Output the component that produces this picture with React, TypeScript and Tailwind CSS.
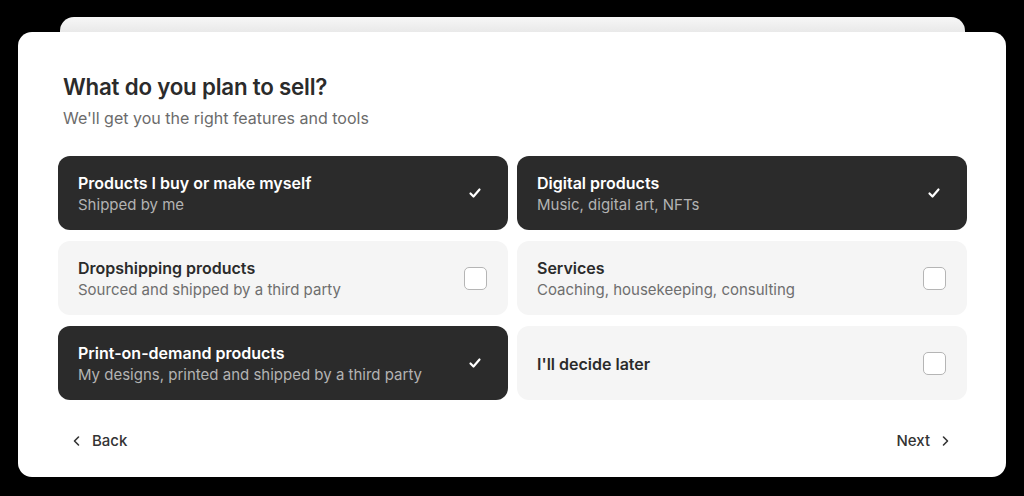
import React from "react";

type Opt = { title: string; sub?: string; checked: boolean };

const options: Opt[] = [
  { title: "Products I buy or make myself", sub: "Shipped by me", checked: true },
  { title: "Digital products", sub: "Music, digital art, NFTs", checked: true },
  { title: "Dropshipping products", sub: "Sourced and shipped by a third party", checked: false },
  { title: "Services", sub: "Coaching, housekeeping, consulting", checked: false },
  { title: "Print-on-demand products", sub: "My designs, printed and shipped by a third party", checked: true },
  { title: "I'll decide later", checked: false },
];

function Check() {
  return (
    <svg width="14" height="14" viewBox="0 0 14 14" fill="none">
      <path d="M2.5 7.5 L5.5 10.5 L11.5 3.5" stroke="white" strokeWidth="2.2" strokeLinecap="round" strokeLinejoin="round" />
    </svg>
  );
}

function Option({ o }: { o: Opt }) {
  return (
    <div
      className={
        o.checked
          ? "flex h-[74px] items-center justify-between rounded-xl bg-[#2b2b2b] pl-5 pr-5"
          : "flex h-[74px] items-center justify-between rounded-xl bg-[#f5f5f5] pl-5 pr-5"
      }
    >
      <div className="flex flex-col pt-[1px]">
        <div className={o.checked ? "text-[16px] leading-[22px] font-semibold text-white" : "text-[16px] leading-[22px] font-semibold text-[#2b2b2b]"}>
          {o.title}
        </div>
        {o.sub && (
          <div className={o.checked ? "text-[15px] leading-[22px] text-[#b3b3b3]" : "text-[15px] leading-[22px] text-[#6e6e6e]"}>
            {o.sub}
          </div>
        )}
      </div>
      {o.checked ? (
        <div className="mr-[2px] flex h-[23px] w-[23px] items-center justify-center">
          <Check />
        </div>
      ) : (
        <div className="mr-[1px] h-[23px] w-[23px] rounded-[5px] border-[1.5px] border-[#b5b5b5] bg-white" />
      )}
    </div>
  );
}

export default function App() {
  return (
    <div
      className="flex h-[496px] w-[1024px] flex-col bg-black"
      style={{ fontFamily: "Inter, 'Noto Sans', sans-serif" }}
    >
      <div className="mx-[60px] mt-[17px] h-[15px] w-[905px] rounded-t-[14px] bg-gradient-to-b from-[#f7f7f7] to-[#e9e9e9]" />
      <div className="mx-[18px] flex h-[445px] w-[988px] flex-col rounded-[14px] bg-white pl-10 pr-[39px] pt-[40px]">
        <div className="px-[5px]">
          <h1 className="text-[22.3px] leading-[30px] font-semibold tracking-[-0.2px] text-[#2b2b2b]">What do you plan to sell?</h1>
          <p className="mt-[4px] text-[16px] leading-[24px] text-[#6b6b6b]">We'll get you the right features and tools</p>
        </div>
        <div className="mt-[26px] grid grid-cols-2 gap-x-[9px] gap-y-[11px]">
          {options.map((o) => (
            <Option key={o.title} o={o} />
          ))}
        </div>
        <div className="mt-[30px] flex items-center justify-between px-[13px] text-[15px] font-medium text-[#333]">
          <div className="flex items-center gap-[9px]">
            <svg width="12" height="12" viewBox="0 0 12 12" fill="none">
              <path d="M7.5 2 L3.5 6 L7.5 10" stroke="#333" strokeWidth="1.6" strokeLinecap="round" strokeLinejoin="round" />
            </svg>
            <span>Back</span>
          </div>
          <div className="flex items-center gap-[9px] pr-[3px]">
            <span>Next</span>
            <svg width="12" height="12" viewBox="0 0 12 12" fill="none">
              <path d="M4.5 2 L8.5 6 L4.5 10" stroke="#333" strokeWidth="1.6" strokeLinecap="round" strokeLinejoin="round" />
            </svg>
          </div>
        </div>
      </div>
    </div>
  );
}
